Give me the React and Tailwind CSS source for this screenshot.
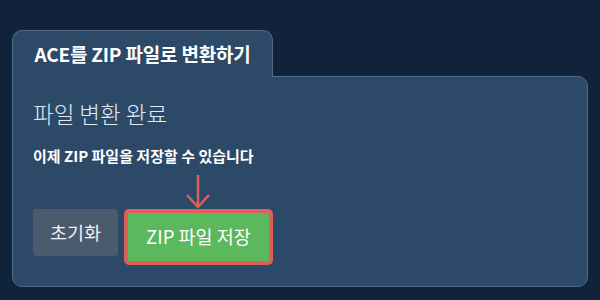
const App = () => {
    return (
        <div className="w-[600px] h-[300px] bg-[#10233a] pt-[30px] px-[12px]" style={{ fontFamily: '"Noto Sans CJK KR", "Noto Sans", sans-serif' }}>
            {/* Tab */}
            <div className="relative z-10 -mb-px w-[261px] h-[47px] bg-[#2c4968] border border-b-0 border-[#4d6a8b] rounded-t-[10px] flex items-center justify-center">
                <span className="text-[19px] font-bold text-white tracking-[-0.2px]">ACE를 ZIP 파일로 변환하기</span>
            </div>

            {/* Panel */}
            <div className="h-[211px] bg-[#2c4968] border border-[#4d6a8b] rounded-tr-[10px] rounded-b-[10px] pl-[20px] pt-[21px]">
                <h2 className="text-[22.5px] font-light text-[#e3e9f0] leading-[30px]">파일 변환 완료</h2>
                <p className="mt-[18px] text-[15px] font-bold text-white leading-[20px]">이제 ZIP 파일을 저장할 수 있습니다</p>

                <div className="mt-[43px] flex items-start gap-[6px]">
                    <button className="h-[47px] px-[17px] bg-[#4a5b6e] rounded-[4px] text-[18.5px] text-[#eef1f4]">초기화</button>
                    <div className="relative border-4 border-[#de5f5a] rounded-[5px]">
                        <svg className="absolute left-1/2 -translate-x-1/2 -top-[39px]" width="26" height="36" viewBox="0 0 26 36" fill="none">
                            <path d="M13 1 V33" stroke="#de5f5a" strokeWidth="2.5" />
                            <path d="M2 21 L13 33 L24 21" stroke="#de5f5a" strokeWidth="2.5" />
                        </svg>
                        <button className="h-[48px] px-[18px] bg-[#5cb85c] text-[18.5px] text-white">ZIP 파일 저장</button>
                    </div>
                </div>
            </div>
        </div>
    );
};

export default App;
